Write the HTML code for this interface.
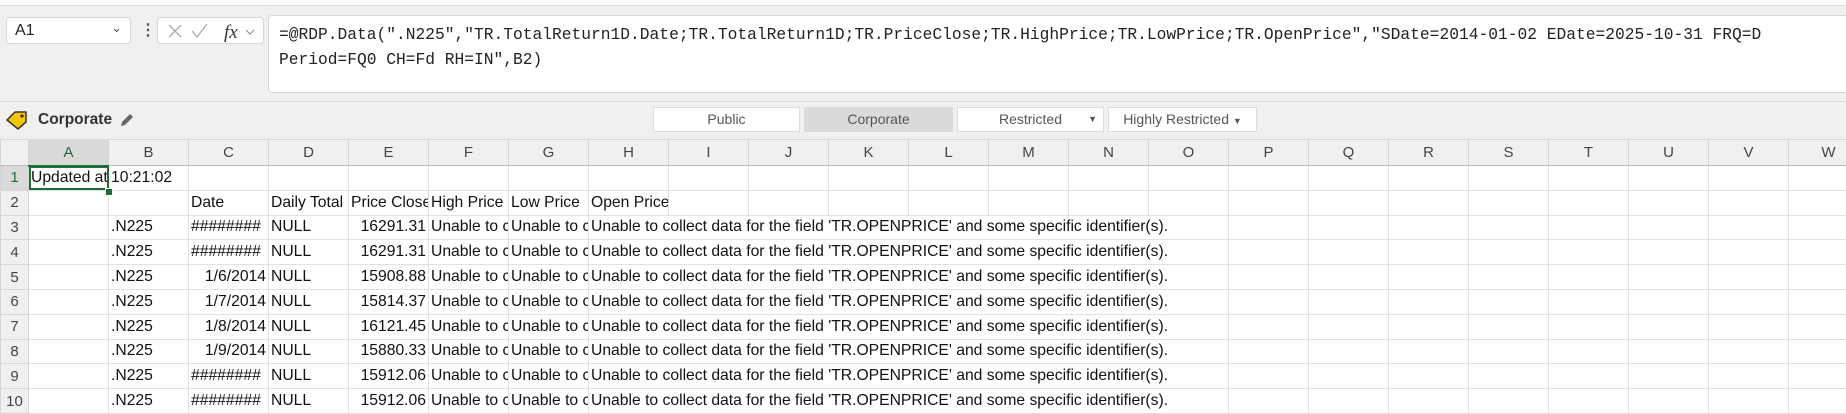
<!DOCTYPE html>
<html><head><meta charset="utf-8"><style>
body{margin:0;width:1846px;height:404px;overflow:hidden;background:#f0f0f0;font-family:"Liberation Sans",sans-serif;position:relative}
.abs{position:absolute}
.top{left:0;top:0;width:1846px;height:100px;background:#f0f0f0}
.nb{left:6px;top:17px;width:125px;height:27px;background:#fff;border:1px solid #d6d6d6;border-radius:4px;box-sizing:border-box;font-size:16px;color:#222;padding:4px 8px}
.fxb{left:157px;top:17px;width:107px;height:27px;background:#fff;border:1px solid #d6d6d6;border-radius:4px;box-sizing:border-box}
.fbox{left:268px;top:15px;width:1590px;height:78px;background:#fff;border:1px solid #d6d6d6;border-radius:4px;box-sizing:border-box;font-family:"Liberation Mono",monospace;font-size:16.25px;color:#222;padding:6px 10px;line-height:25px;white-space:pre}
.lbar{left:0;top:101px;width:1846px;height:38px;background:#f0f0f0;border-top:1px solid #dcdcdc}
.btn{top:107px;height:25px;background:#fff;border:1px solid #dcdcdc;box-sizing:border-box;font-size:14px;color:#555;text-align:center;line-height:23px}
table{position:absolute;left:0;top:139px;width:1868px;border-collapse:collapse;table-layout:fixed;background:#fff}
td{height:24.8px;border:1px solid #e1e1e1;padding:0 2px;font-size:15.7px;color:#111;white-space:nowrap;overflow:hidden;box-sizing:border-box}
td.h{background:#f0f0f0;color:#444;text-align:center;font-size:15px;border-color:#d5d5d5}
tr.ch td{height:26px;border-bottom:1px solid #bdbdbd}
.r{text-align:right}
.ov{overflow:visible}
</style></head><body>
<div class="abs top"></div>
<div class="abs" style="left:0;top:0;width:1846px;height:5px;background:#fff;border-bottom:1px solid #ddd"></div>
<div class="abs nb">A1<span style="position:absolute;right:8px;top:2px;color:#555;font-size:13px">&#8964;</span></div>
<div class="abs" style="left:140px;top:20px;font-size:16px;color:#555;font-weight:bold">&#8942;</div>
<div class="abs fxb"><svg width="107" height="27"><path d="M11 7l12 12M23 7L11 19" stroke="#aaa" stroke-width="1.3"/><path d="M34 13l5 6l10-13" stroke="#aaa" stroke-width="1.3" fill="none"/><text x="66" y="20" font-family="Liberation Serif" font-style="italic" font-size="19" fill="#333">fx</text><path d="M88 12l4 4l4-4" stroke="#888" fill="none"/></svg></div>
<div class="abs fbox">=@RDP.Data(".N225","TR.TotalReturn1D.Date;TR.TotalReturn1D;TR.PriceClose;TR.HighPrice;TR.LowPrice;TR.OpenPrice","SDate=2014-01-02 EDate=2025-10-31 FRQ=D
Period=FQ0 CH=Fd RH=IN",B2)</div>
<div class="abs lbar"></div>
<svg class="abs" style="left:5px;top:110px" width="24" height="20"><path d="M2 10L10 2H21V12L13 19Z" fill="#f5c400" stroke="#333" stroke-width="1.5" stroke-linejoin="round"/><circle cx="17" cy="6" r="1.6" fill="#333"/></svg>
<div class="abs" style="left:38px;top:111px;font-size:15.5px;font-weight:bold;color:#333">Corporate</div>
<svg class="abs" style="left:119px;top:112px" width="16" height="16"><path d="M2 14l1-4l8-8l3 3l-8 8z" fill="#666"/></svg>
<div class="abs btn" style="left:653px;width:147px">Public</div>
<div class="abs btn" style="left:804px;width:149px;background:#dadada">Corporate</div>
<div class="abs btn" style="left:957px;width:147px">Restricted<span style="position:absolute;right:6px;font-size:9px">&#9660;</span></div>
<div class="abs btn" style="left:1108px;width:149px">Highly Restricted <span style="font-size:9px">&#9660;</span></div>
<table>
<colgroup><col style="width:28px"><col span="23" style="width:80px"></colgroup>
<tr class="ch"><td class="h" style="background:#f0f0f0"></td><td class="h" style="background:#d9d9d9;color:#1e6b3c;border-bottom:2px solid #1e6b3c">A</td><td class="h">B</td><td class="h">C</td><td class="h">D</td><td class="h">E</td><td class="h">F</td><td class="h">G</td><td class="h">H</td><td class="h">I</td><td class="h">J</td><td class="h">K</td><td class="h">L</td><td class="h">M</td><td class="h">N</td><td class="h">O</td><td class="h">P</td><td class="h">Q</td><td class="h">R</td><td class="h">S</td><td class="h">T</td><td class="h">U</td><td class="h">V</td><td class="h">W</td></tr>
<tr><td class="h" style="background:#d9d9d9;color:#1e6b3c">1</td><td style="outline:2px solid #1e6b3c;outline-offset:-2px">Updated at</td><td>10:21:02</td><td></td><td></td><td></td><td></td><td></td><td></td><td></td><td></td><td></td><td></td><td></td><td></td><td></td><td></td><td></td><td></td><td></td><td></td><td></td><td></td><td></td></tr>
<tr><td class="h">2</td><td></td><td></td><td>Date</td><td>Daily Total</td><td>Price Close</td><td>High Price</td><td>Low Price</td><td>Open Price</td><td></td><td></td><td></td><td></td><td></td><td></td><td></td><td></td><td></td><td></td><td></td><td></td><td></td><td></td><td></td></tr>
<tr><td class="h">3</td><td></td><td>.N225</td><td>########</td><td>NULL</td><td class="r">16291.31</td><td>Unable to collect</td><td>Unable to collect</td><td colspan="8" class="ov">Unable to collect data for the field 'TR.OPENPRICE' and some specific identifier(s).</td><td></td><td></td><td></td><td></td><td></td><td></td><td></td><td></td></tr>
<tr><td class="h">4</td><td></td><td>.N225</td><td>########</td><td>NULL</td><td class="r">16291.31</td><td>Unable to collect</td><td>Unable to collect</td><td colspan="8" class="ov">Unable to collect data for the field 'TR.OPENPRICE' and some specific identifier(s).</td><td></td><td></td><td></td><td></td><td></td><td></td><td></td><td></td></tr>
<tr><td class="h">5</td><td></td><td>.N225</td><td class="r">1/6/2014</td><td>NULL</td><td class="r">15908.88</td><td>Unable to collect</td><td>Unable to collect</td><td colspan="8" class="ov">Unable to collect data for the field 'TR.OPENPRICE' and some specific identifier(s).</td><td></td><td></td><td></td><td></td><td></td><td></td><td></td><td></td></tr>
<tr><td class="h">6</td><td></td><td>.N225</td><td class="r">1/7/2014</td><td>NULL</td><td class="r">15814.37</td><td>Unable to collect</td><td>Unable to collect</td><td colspan="8" class="ov">Unable to collect data for the field 'TR.OPENPRICE' and some specific identifier(s).</td><td></td><td></td><td></td><td></td><td></td><td></td><td></td><td></td></tr>
<tr><td class="h">7</td><td></td><td>.N225</td><td class="r">1/8/2014</td><td>NULL</td><td class="r">16121.45</td><td>Unable to collect</td><td>Unable to collect</td><td colspan="8" class="ov">Unable to collect data for the field 'TR.OPENPRICE' and some specific identifier(s).</td><td></td><td></td><td></td><td></td><td></td><td></td><td></td><td></td></tr>
<tr><td class="h">8</td><td></td><td>.N225</td><td class="r">1/9/2014</td><td>NULL</td><td class="r">15880.33</td><td>Unable to collect</td><td>Unable to collect</td><td colspan="8" class="ov">Unable to collect data for the field 'TR.OPENPRICE' and some specific identifier(s).</td><td></td><td></td><td></td><td></td><td></td><td></td><td></td><td></td></tr>
<tr><td class="h">9</td><td></td><td>.N225</td><td>########</td><td>NULL</td><td class="r">15912.06</td><td>Unable to collect</td><td>Unable to collect</td><td colspan="8" class="ov">Unable to collect data for the field 'TR.OPENPRICE' and some specific identifier(s).</td><td></td><td></td><td></td><td></td><td></td><td></td><td></td><td></td></tr>
<tr><td class="h">10</td><td></td><td>.N225</td><td>########</td><td>NULL</td><td class="r">15912.06</td><td>Unable to collect</td><td>Unable to collect</td><td colspan="8" class="ov">Unable to collect data for the field 'TR.OPENPRICE' and some specific identifier(s).</td><td></td><td></td><td></td><td></td><td></td><td></td><td></td><td></td></tr>
</table>
<div class="abs" style="left:105px;top:188px;width:6px;height:6px;background:#1e6b3c;border:1px solid #fff"></div>
</body></html>
